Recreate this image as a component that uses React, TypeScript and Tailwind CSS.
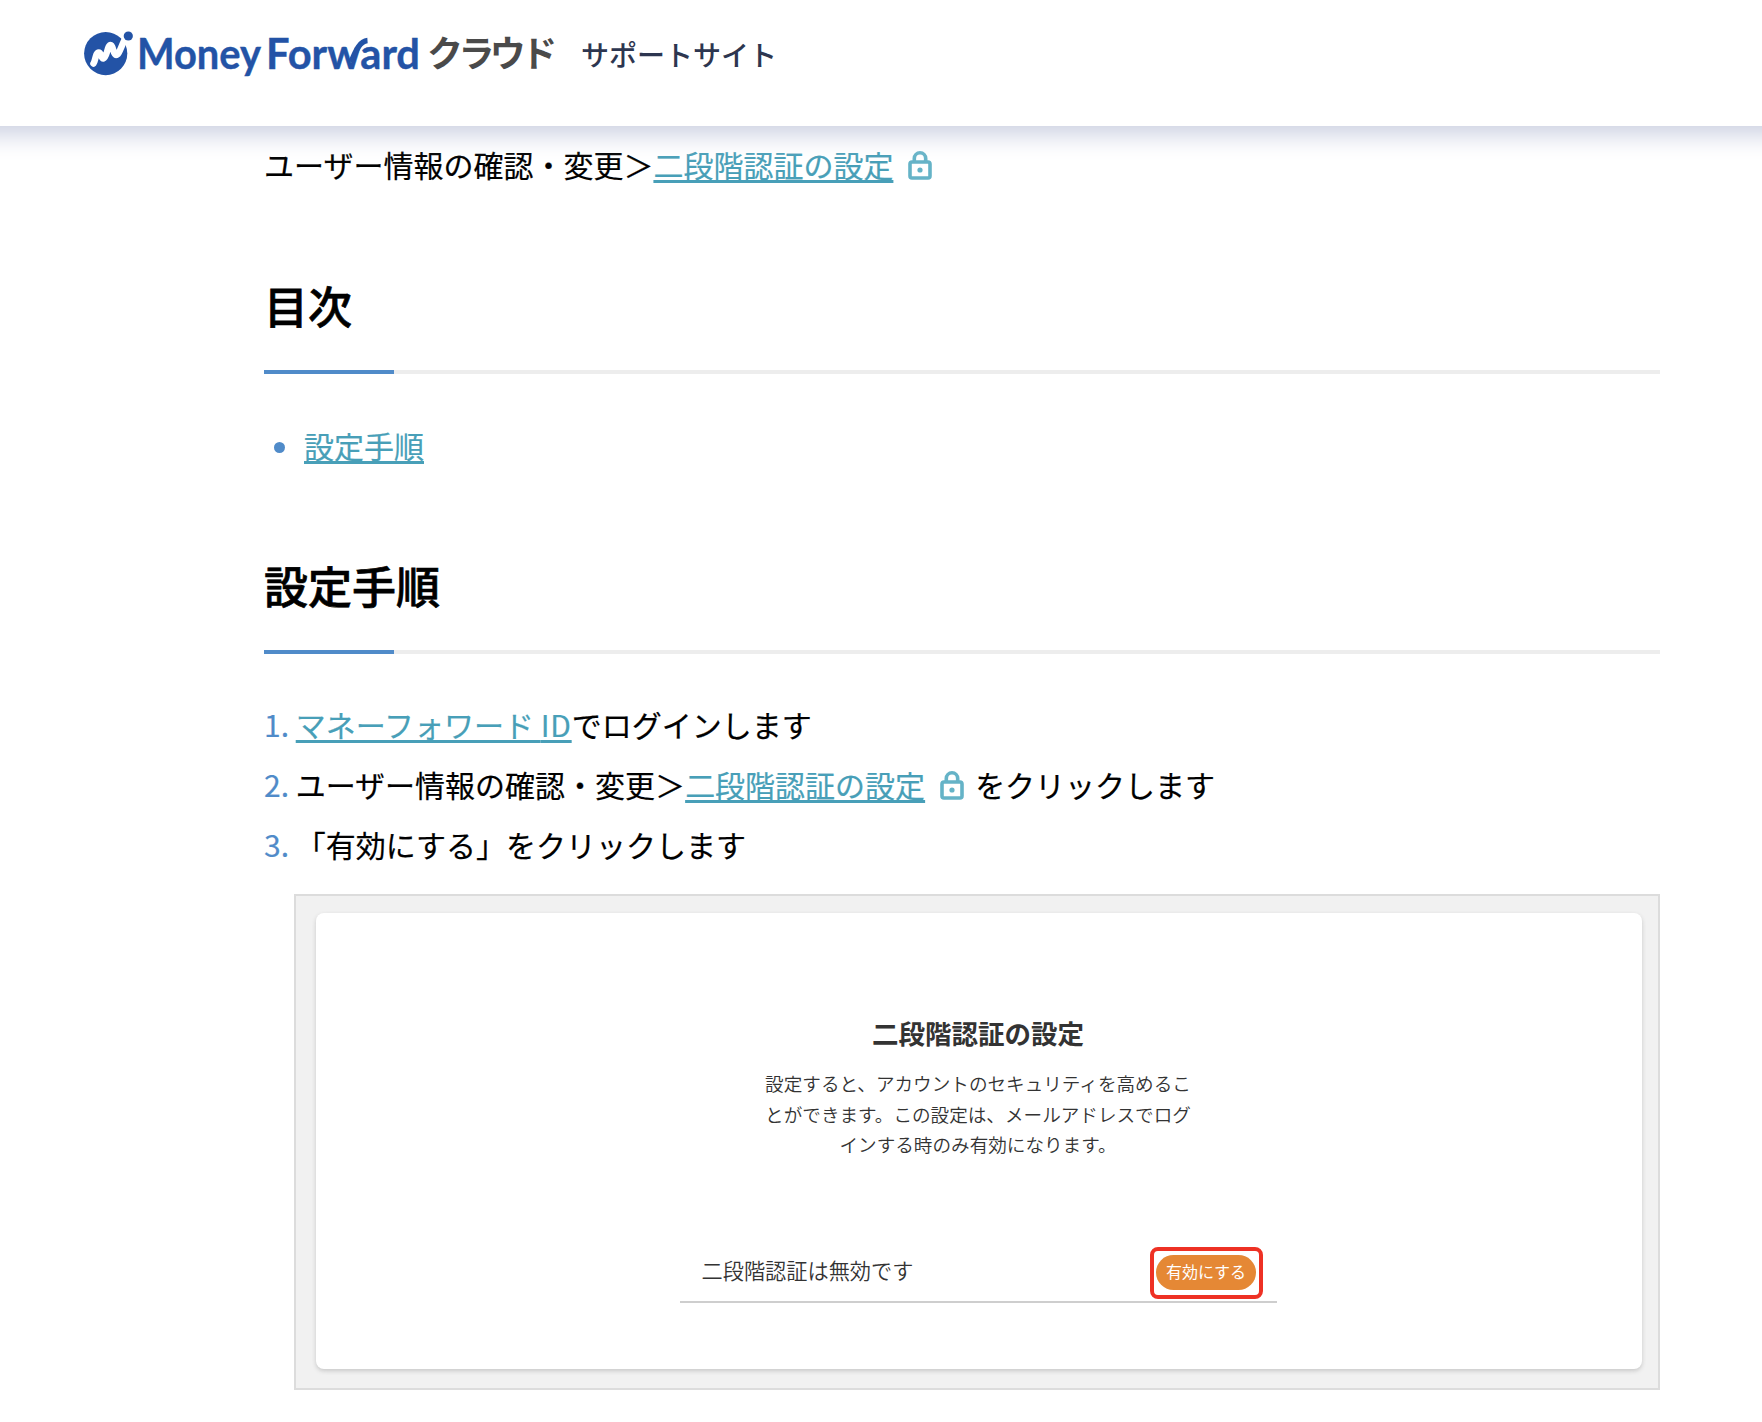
import React from 'react';

const steps = {
  verify: '二段階認証の設定',
  path: 'ユーザー情報の確認・変更＞',
};

function Logo() {
  return (
    <svg width="345" height="72" viewBox="0 -6 345 72" className="block shrink-0 overflow-visible" role="img" aria-label="Money Forward">
      <defs>
        <mask id="mark">
          <rect width="60" height="60" fill="white" />
          <circle cx="48.3" cy="10" r="7.2" fill="black" />
        </mask>
      </defs>
      <g mask="url(#mark)">
        <circle cx="25.7" cy="27.6" r="21.6" fill="#2353a6" />
        <path
          d="M13.5 37.500 C15.500 35 15.500 26.500 18.700 26.500 C21.500 26.500 21 33 23.500 32.500 C27 31.500 27.500 19 30.500 19 C33.500 19 33 29 36 29 C39 29 40.500 22 44.500 14"
          fill="none"
          stroke="white"
          strokeWidth="6.500"
          strokeLinecap="round"
          strokeLinejoin="round"
        />
      </g>
      <circle cx="48.3" cy="10" r="4.6" fill="#2353a6" />
      <g fill="#2353a6" fontFamily="Lato, sans-serif" fontWeight="700" fontSize="42.500" stroke="#2353a6" strokeWidth="0.4">
        <text x="57" y="43" textLength="124" lengthAdjust="spacingAndGlyphs">Money</text>
        <text x="186" y="43" textLength="154" lengthAdjust="spacingAndGlyphs">Forward</text>
      </g>
      <path d="M271 36 C276 24 280 15 287.500 14.500" fill="none" stroke="#2353a6" strokeWidth="5.500" />
    </svg>
  );
}

function LockIcon() {
  return (
    <svg viewBox="0 0 24 29" className="mr-[11px] mb-[6px] ml-[15px] inline-block h-[29px] w-6 align-middle" fill="none" stroke="#65b3c7">
      <rect x="2" y="11" width="20" height="16" rx="2" strokeWidth="3.600" />
      <path d="M6.300 11V7.500a5.700 5.700 0 0 1 11.400 0V11" strokeWidth="3.600" />
      <circle cx="12" cy="19" r="2.600" fill="#65b3c7" stroke="none" />
    </svg>
  );
}

function TextLink({ children }: { children: React.ReactNode }) {
  return (
    <a href="#" className="text-[#489fb8] underline decoration-[3px] underline-offset-[3px] [text-decoration-skip-ink:none]">
      {children}
    </a>
  );
}

function SectionTitle({ children }: { children: React.ReactNode }) {
  return (
    <div>
      <h2 className="text-[44px] leading-[62px] font-medium [-webkit-text-stroke:0.7px_black]">{children}</h2>
      <div className="mt-[34px] h-1 bg-[#ededed]">
        <div className="h-1 w-[130px] bg-[#508bc9]" />
      </div>
    </div>
  );
}

export default function App() {
  return (
    <div className="h-[1422px] overflow-hidden bg-white font-['Noto_Sans_CJK_JP',sans-serif] text-black">
      {/* Header */}
      <header className="relative flex h-[126px] items-start bg-white pt-5 pl-20 shadow-[0_-24px_24px_32px_#c9cee0]">
        <Logo />
        <span className="w-[135px] pt-[5px] pl-[2px] text-[36px] leading-[52px] font-bold tracking-[-4.6px] whitespace-nowrap text-[#4a4a4a]">
          クラウド
        </span>
        <span className="ml-[21px] pt-[13px] text-[28px] leading-[42px] font-medium text-[#2d3650]">サポートサイト</span>
      </header>

      <main className="ml-[264px] w-[1396px] pt-[8px] text-[30px] leading-[60px] [-webkit-text-stroke:0.2px_currentColor]">
        <p className="h-[60px]">
          {steps.path}
          <TextLink>{steps.verify}</TextLink>
          <LockIcon />
        </p>

        {/* Table of contents */}
        <div className="mt-[80px]">
          <SectionTitle>目次</SectionTitle>
          <div className="mt-[41px] flex h-[60px] items-center">
            <span className="mt-1 mr-[19px] ml-[10px] size-[11px] rounded-full bg-[#508bc9]" />
            <TextLink>設定手順</TextLink>
          </div>
        </div>

        {/* Steps */}
        <div className="mt-[79px]">
          <SectionTitle>設定手順</SectionTitle>
          <div className="mt-[40px]">
            <div className="h-[60px]">
              <span className="text-[#508bc9]">1. </span>
              <TextLink>
                マネーフォワード <span className="tracking-[0.8px]">ID</span>
              </TextLink>
              でログインします
            </div>
            <div className="h-[60px]">
              <span className="text-[#508bc9]">2. </span>
              {steps.path}
              <TextLink>{steps.verify}</TextLink>
              <LockIcon />
              をクリックします
            </div>
            <div className="h-[60px]">
              <span className="text-[#508bc9]">3. </span>
              「有効にする」をクリックします
            </div>
          </div>

          <div className="mt-[20px] ml-[30px] h-[496px] border-2 border-[#dcdcdc] bg-[#f1f1f1] pt-[17px] pl-5 [-webkit-text-stroke:0]">
            <div className="flex h-[456px] w-[1326px] flex-col items-center rounded-lg bg-white pt-[100px] pr-[2px] text-[#333] shadow-[0_2px_4px_#c8c8c8]">
              <h3 className="text-[26.5px] leading-[40px] font-bold">二段階認証の設定</h3>
              <p className="mt-[15px] w-[430px] text-center text-[18.6px] leading-[30.5px] font-[350]">
                設定すると、アカウントのセキュリティを高めるこ
                <br />
                とができます。この設定は、メールアドレスでログ
                <br />
                インする時のみ有効になります。
              </p>
              <div className="mt-[87px] flex h-[56px] w-[597px] items-start justify-between border-b-2 border-[#cecece] pr-[14px] pl-[22px]">
                <span className="text-[21.2px] leading-[46px] font-[350]">二段階認証は無効です</span>
                <span className="flex h-[52px] w-[113px] items-center justify-center rounded-lg border-4 border-[#ee3124]">
                  <span className="h-[35px] w-[100px] rounded-full bg-[#e58835] text-center text-[16px] leading-[33px] text-white">
                    有効にする
                  </span>
                </span>
              </div>
            </div>
          </div>
        </div>
      </main>
    </div>
  );
}
